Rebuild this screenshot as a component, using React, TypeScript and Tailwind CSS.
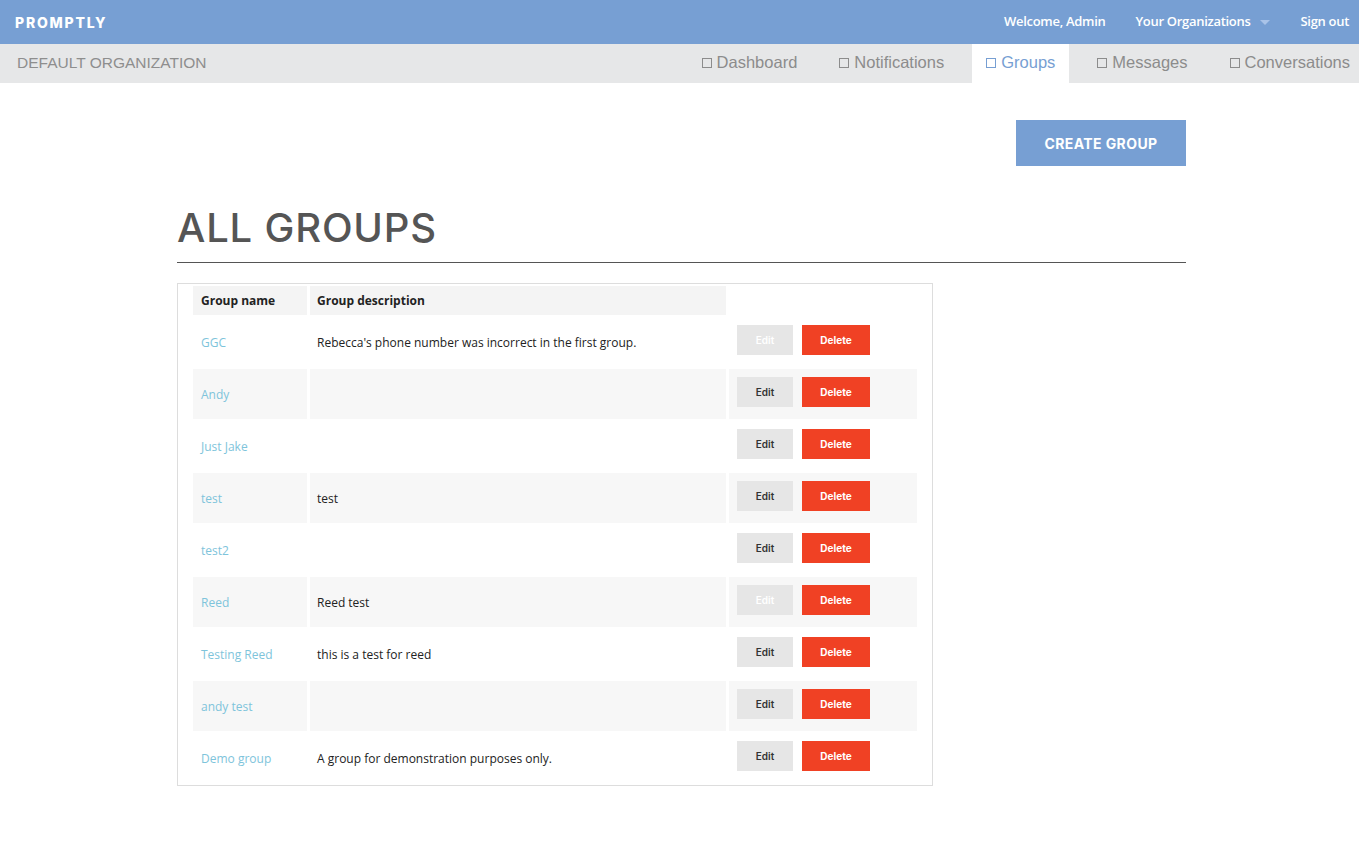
import React from "react";

const groups = [
  { name: "GGC", desc: "Rebecca's phone number was incorrect in the first group.", disabled: true },
  { name: "Andy", desc: "" },
  { name: "Just Jake", desc: "" },
  { name: "test", desc: "test" },
  { name: "test2", desc: "" },
  { name: "Reed", desc: "Reed test", disabled: true },
  { name: "Testing Reed", desc: "this is a test for reed" },
  { name: "andy test", desc: "" },
  { name: "Demo group", desc: "A group for demonstration purposes only." },
];

const tabs = ["Dashboard", "Notifications", "Groups", "Messages", "Conversations"];

function Box({ active }: { active?: boolean }) {
  return (
    <span
      className={
        "inline-block w-[10px] h-[10px] border mr-[5px] " +
        (active ? "border-[#779fd3]" : "border-[#8c8c8c]")
      }
    />
  );
}

export default function App() {
  return (
    <div className="min-h-[848px] bg-white font-['Open_Sans',sans-serif]">
      {/* top bar */}
      <div className="h-[44px] bg-[#779fd3] flex items-center justify-between pl-[15px] pr-[10px]">
        <div className="text-white font-['Inter',sans-serif] font-extrabold text-[14px] tracking-[1.8px]">
          PROMPTLY
        </div>
        <div className="flex items-center text-white text-[13px] font-semibold tracking-[-0.3px]">
          <span>Welcome, Admin</span>
          <span className="ml-[30px]">Your Organizations</span>
          <span className="ml-[10px] w-0 h-0 border-l-[5px] border-r-[5px] border-t-[5px] border-l-transparent border-r-transparent border-t-[#a9c3e8]" />
          <span className="ml-[30px]">Sign out</span>
        </div>
      </div>

      {/* org bar */}
      <div className="h-[39px] bg-[#e6e7e8] flex items-stretch justify-between pl-[17px] font-['Liberation_Sans',sans-serif]">
        <div className="flex items-center pb-[2px] text-[15.5px] text-[#8e8e8e]">DEFAULT ORGANIZATION</div>
        <div className="flex items-stretch gap-[14px] text-[16.5px]">
          {tabs.map((t) => {
            const active = t === "Groups";
            return (
              <div
                key={t}
                className={
                  "flex items-center pb-[2px] px-[14px] last:pr-[9px] " +
                  (active ? "bg-white text-[#779fd3]" : "text-[#8c8c8c]")
                }
              >
                <Box active={active} />
                {t}
              </div>
            );
          })}
        </div>
      </div>

      <main className="ml-[177px] w-[1009px]">
        <div className="flex justify-end mt-[37px]">
          <button className="w-[170px] h-[46px] bg-[#779fd3] text-white font-['Inter',sans-serif] font-bold text-[14px] tracking-[0.4px]">
            CREATE GROUP
          </button>
        </div>

        <h1 className="mt-[38px] text-[40px] leading-[48px] font-['Inter',sans-serif] font-medium text-[#555555] tracking-[0.8px]">
          ALL GROUPS
        </h1>
        <div className="mt-[10px] h-px bg-[#555555]" />

        <div className="mt-[20px] w-[756px] border border-[#dddddd] px-[12px]">
          <div className="grid grid-cols-[114px_416px_188px] gap-x-[3px] gap-y-[2px] px-[3px] py-[2px]">
            <div className="h-[29px] bg-[#f4f4f4] flex items-center px-[8px] text-[12px] font-bold text-[#222]">
              Group name
            </div>
            <div className="h-[29px] bg-[#f4f4f4] flex items-center px-[7px] text-[12px] font-bold text-[#222]">
              Group description
            </div>
            <div className="h-[29px]" />
            {groups.map((g, i) => {
              const bg = i % 2 === 1 ? "bg-[#f7f7f7]" : "";
              return (
                <React.Fragment key={g.name}>
                  <div className={"h-[50px] flex items-center pt-[1px] px-[8px] text-[12px] text-[#7ec4db] " + bg}>
                    {g.name}
                  </div>
                  <div className={"h-[50px] flex items-center pt-[1px] px-[7px] text-[12px] text-[#222] " + bg}>
                    {g.desc}
                  </div>
                  <div className={"h-[50px] flex items-start pt-[8px] pl-[8px] gap-[9px] " + bg}>
                    <button
                      className={
                        "w-[56px] h-[30px] bg-[#e6e6e6] font-['Inter',sans-serif] font-semibold text-[10px] " +
                        (g.disabled ? "text-white" : "text-[#333]")
                      }
                    >
                      Edit
                    </button>
                    <button className="w-[68px] h-[30px] bg-[#f04124] text-white font-['Inter',sans-serif] font-bold text-[10px]">
                      Delete
                    </button>
                  </div>
                </React.Fragment>
              );
            })}
          </div>
        </div>
      </main>
    </div>
  );
}
